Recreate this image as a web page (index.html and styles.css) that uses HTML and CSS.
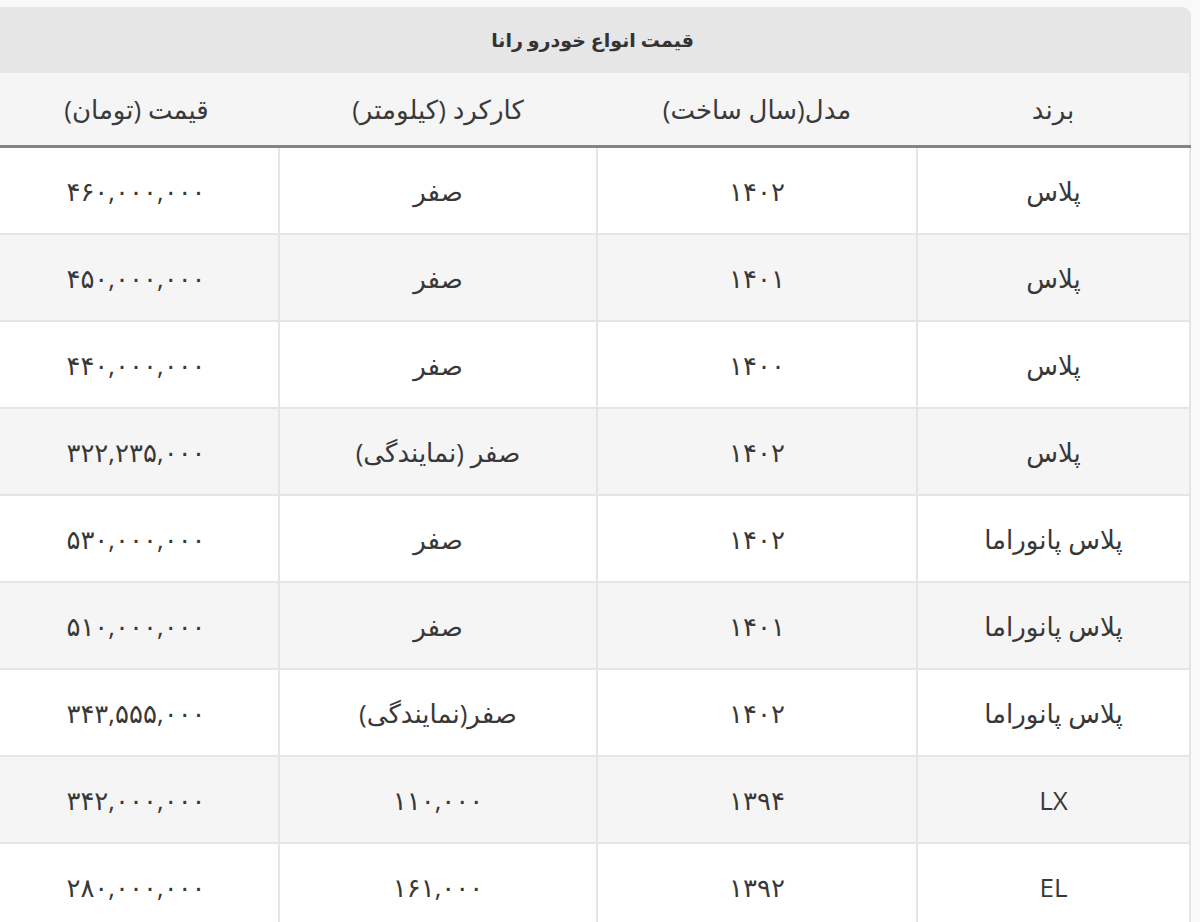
FILE: index.html
```html
<!DOCTYPE html>
<html lang="fa" dir="rtl">
<head>
<meta charset="utf-8">
<title>قیمت انواع خودرو رانا</title>
<link rel="stylesheet" href="styles.css">
</head>
<body>
<div class="wrap">
  <div class="caption">قیمت انواع خودرو رانا</div>
  <table class="price-table">
    <thead>
      <tr>
        <th class="c-brand">برند</th>
        <th class="c-model">مدل(سال ساخت)</th>
        <th class="c-km">کارکرد (کیلومتر)</th>
        <th class="c-price">قیمت (تومان)</th>
      </tr>
    </thead>
    <tbody>
      <tr><td>پلاس</td><td>۱۴۰۲</td><td>صفر</td><td>۴۶۰,۰۰۰,۰۰۰</td></tr>
      <tr><td>پلاس</td><td>۱۴۰۱</td><td>صفر</td><td>۴۵۰,۰۰۰,۰۰۰</td></tr>
      <tr><td>پلاس</td><td>۱۴۰۰</td><td>صفر</td><td>۴۴۰,۰۰۰,۰۰۰</td></tr>
      <tr><td>پلاس</td><td>۱۴۰۲</td><td>صفر (نمایندگی)</td><td>۳۲۲,۲۳۵,۰۰۰</td></tr>
      <tr><td>پلاس پانوراما</td><td>۱۴۰۲</td><td>صفر</td><td>۵۳۰,۰۰۰,۰۰۰</td></tr>
      <tr><td>پلاس پانوراما</td><td>۱۴۰۱</td><td>صفر</td><td>۵۱۰,۰۰۰,۰۰۰</td></tr>
      <tr><td>پلاس پانوراما</td><td>۱۴۰۲</td><td>صفر(نمایندگی)</td><td>۳۴۳,۵۵۵,۰۰۰</td></tr>
      <tr><td>LX</td><td>۱۳۹۴</td><td>۱۱۰,۰۰۰</td><td>۳۴۲,۰۰۰,۰۰۰</td></tr>
      <tr><td>EL</td><td>۱۳۹۲</td><td>۱۶۱,۰۰۰</td><td>۲۸۰,۰۰۰,۰۰۰</td></tr>
    </tbody>
  </table>
</div>
</body>
</html>
```

FILE: styles.css
```css
html, body {
  margin: 0;
  padding: 0;
  background: #f9f9f9;
}

body {
  font-family: "Open Sans", "DejaVu Sans", sans-serif;
  color: #383838;
  overflow: hidden;
}

.wrap {
  width: 1197px;
  margin-top: 7px;
  margin-right: 9px;
}

.caption {
  height: 66px;
  background: #e6e6e6;
  border-radius: 9px 9px 0 0;
  display: flex;
  align-items: center;
  justify-content: center;
  font-weight: bold;
  font-size: 19px;
  color: #333;
}

.price-table {
  width: 100%;
  border-collapse: collapse;
  table-layout: fixed;
  font-size: 26px;
}

.price-table th {
  height: 72px;
  padding: 0;
  background: #f5f5f5;
  font-weight: normal;
  border-bottom: 3px solid #858585;
  color: #3a3a3a;
}

.price-table thead tr {
  border-right: 2px solid #e8e8e8;
}

.c-brand { width: 272px; }
.c-model { width: 320px; }
.c-km { width: 318px; }

.price-table td {
  height: 85px;
  padding: 0;
  text-align: center;
  border: 2px solid #e5e5e5;
  background: #fff;
}

.price-table td:last-child {
  border-left: none;
}

.price-table tbody tr:nth-child(even) td {
  background: #f5f5f5;
}
```
